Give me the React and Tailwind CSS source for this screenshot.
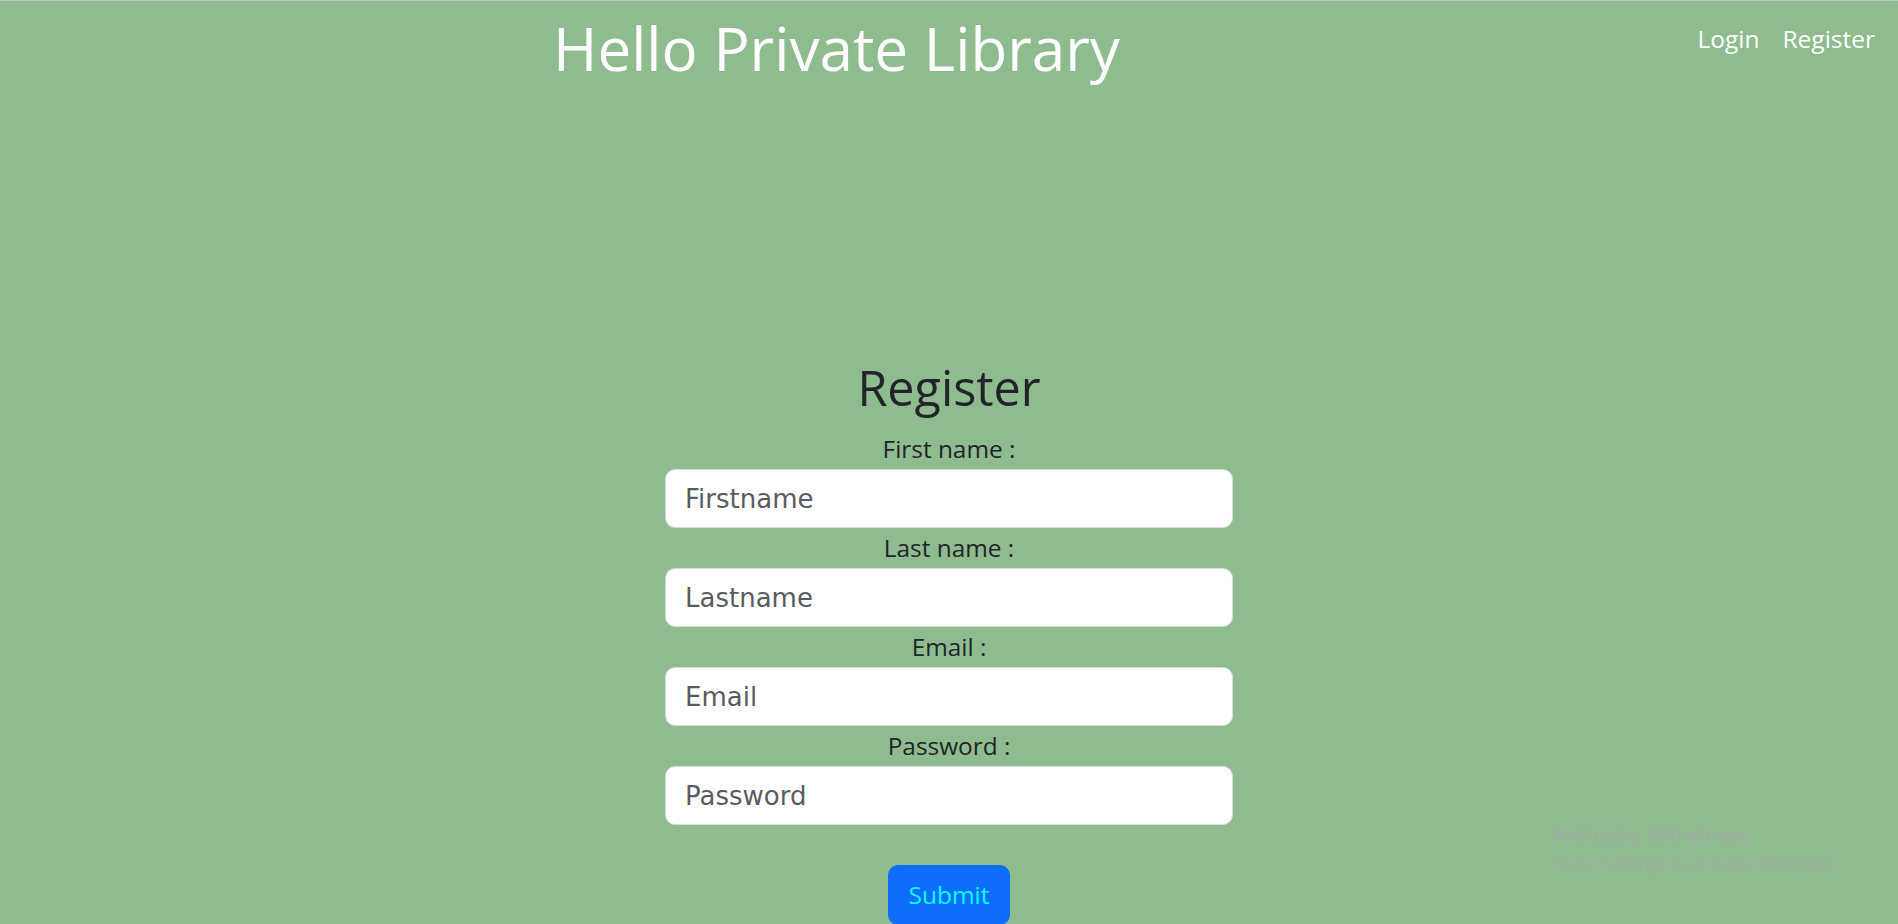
import React from "react";

const sans = { fontFamily: '"Open Sans", "Noto Sans", Arial, sans-serif' };

function Field({ label, placeholder, type = "text" }) {
  return (
    <>
      <label className="block h-[40px] leading-[40px] text-[24.4px] text-[#212529] text-center">
        {label}
      </label>
      <input
        type={type}
        placeholder={placeholder}
        className="block w-full h-[59px] rounded-[10px] border border-[#d6dadd] bg-white px-[19px] text-[26px] text-[#212529] placeholder:text-[#595c5f] outline-none font-['DejaVu_Sans',Verdana,sans-serif]"
      />
    </>
  );
}

export default function App() {
  return (
    <div
      className="relative h-[924px] overflow-hidden bg-[#8fbc8f] border-t border-[#c4c4c4]"
      style={sans}
    >
      <header className="flex items-start h-[100px]">
        <h1 className="ml-[553px] mt-[11px] text-[60.2px] leading-[72px] text-white font-normal">
          Hello Private Library
        </h1>
        <nav className="ml-auto mr-[23px] mt-[20px] flex gap-[23px] text-[24.5px] leading-[36px] text-white">
          <a href="#">Login</a>
          <a href="#">Register</a>
        </nav>
      </header>

      <main className="flex flex-col items-center pt-[256px]">
        <h2 className="h-[60px] text-[48.5px] leading-[60px] mb-[12px] text-[#212529] font-normal">
          Register
        </h2>
        <form className="w-[568px] flex flex-col items-stretch">
          <Field label="First name :" placeholder="Firstname" />
          <Field label="Last name :" placeholder="Lastname" />
          <Field label="Email :" placeholder="Email" type="email" />
          <Field label="Password :" placeholder="Password" type="password" />
          <div className="flex justify-center mt-[40px]">
            <button
              type="button"
              className="w-[122px] h-[60px] rounded-[10px] bg-[#0d6efd] text-[24.5px] text-[#00ffff] border border-[#0d6efd]"
            >
              Submit
            </button>
          </div>
        </form>
      </main>

      <div className="absolute left-[1553px] top-[818px] text-[#a2aca1] pointer-events-none">
        <div className="text-[24px] leading-[32px]">Activate Windows</div>
        <div className="text-[17.5px] leading-[24px]">Go to Settings to activate Windows.</div>
      </div>
    </div>
  );
}
